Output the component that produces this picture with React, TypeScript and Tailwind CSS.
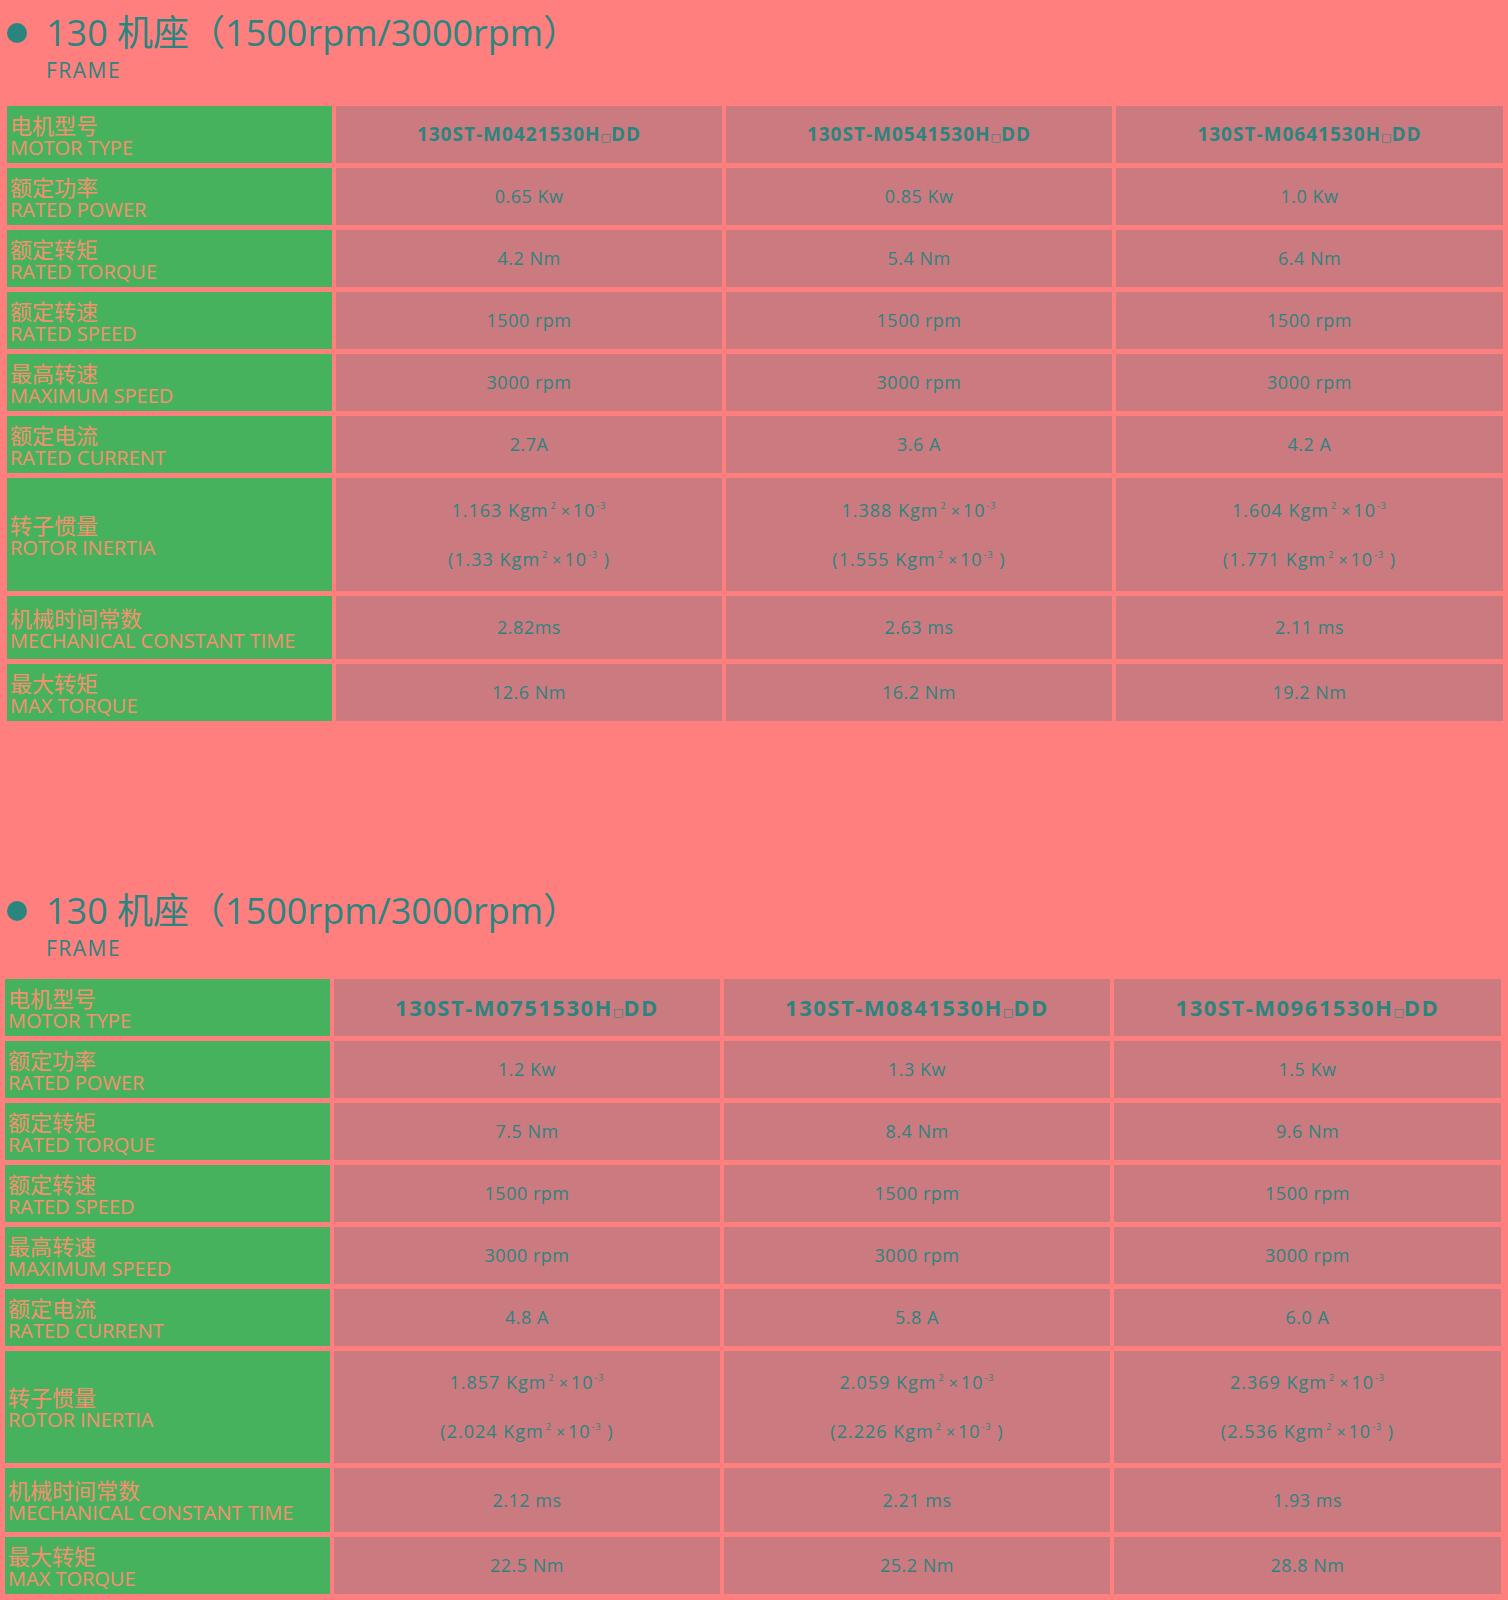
import React from "react";

type Spec = {
  zh: string;
  en: string;
  values: React.ReactNode[];
  h: string;
};

type Section = {
  models: string[];
  power: string[];
  torque: string[];
  current: string[];
  inertia: [string, string][];
  mech: string[];
  maxTorque: string[];
};

const sections: Section[] = [
  {
    models: ["130ST-M0421530H", "130ST-M0541530H", "130ST-M0641530H"],
    power: ["0.65 Kw", "0.85 Kw", "1.0 Kw"],
    torque: ["4.2 Nm", "5.4 Nm", "6.4 Nm"],
    current: ["2.7A", "3.6 A", "4.2 A"],
    inertia: [
      ["1.163", "1.33"],
      ["1.388", "1.555"],
      ["1.604", "1.771"],
    ],
    mech: ["2.82ms", "2.63 ms", "2.11 ms"],
    maxTorque: ["12.6 Nm", "16.2 Nm", "19.2 Nm"],
  },
  {
    models: ["130ST-M0751530H", "130ST-M0841530H", "130ST-M0961530H"],
    power: ["1.2 Kw", "1.3 Kw", "1.5 Kw"],
    torque: ["7.5 Nm", "8.4 Nm", "9.6 Nm"],
    current: ["4.8 A", "5.8 A", "6.0 A"],
    inertia: [
      ["1.857", "2.024"],
      ["2.059", "2.226"],
      ["2.369", "2.536"],
    ],
    mech: ["2.12 ms", "2.21 ms", "1.93 ms"],
    maxTorque: ["22.5 Nm", "25.2 Nm", "28.8 Nm"],
  },
];

function Unit() {
  return (
    <>
      {" "}Kgm<sup className="text-[9px] top-[-8px] px-[2px]">2</sup>
      <span className="text-[16px] mx-[2px]">×</span>10
      <sup className="text-[9px] top-[-8px] ml-[1px]">-3</sup>
    </>
  );
}

function Inertia({ a, b }: { a: string; b: string }) {
  return (
    <div className="flex flex-col items-center tracking-[1px]">
      <span className="leading-[48px]">
        {a}
        <Unit />
      </span>
      <span className="leading-[48px]">
        ({b}
        <Unit /> )
      </span>
    </div>
  );
}

function Model({ name, big }: { name: string; big: boolean }) {
  return (
    <span
      className={
        big
          ? "font-bold text-[22px] tracking-[1.5px]"
          : "font-bold text-[19px] tracking-[1px]"
      }
    >
      {name}
      <span className="font-['DejaVu_Sans'] font-normal text-[11px] tracking-normal">□</span>
      DD
    </span>
  );
}

function Row({ zh, en, values, h }: Spec) {
  return (
    <div className={`grid grid-cols-[325px_386px_386px_387px] gap-x-[4px] ${h}`}>
      <div className="bg-[#47b25e] flex flex-col justify-center pl-[3px] pt-[2px] text-[#f5906f]">
        <div className="text-[22px] leading-[24px]">{zh}</div>
        <div className="text-[20px] leading-[22px]">{en}</div>
      </div>
      {values.map((v, i) => (
        <div
          key={i}
          className="bg-[#cb7a80] flex items-center justify-center text-[#2b857f] text-[18px] tracking-[0.5px]"
        >
          {v}
        </div>
      ))}
    </div>
  );
}

function SpecTable({ s, big }: { s: Section; big: boolean }) {
  const rows: Spec[] = [
    {
      zh: "电机型号",
      en: "MOTOR TYPE",
      values: s.models.map((m) => <Model key={m} name={m} big={big} />),
      h: "h-[57px]",
    },
    { zh: "额定功率", en: "RATED POWER", values: s.power, h: "h-[57px]" },
    { zh: "额定转矩", en: "RATED TORQUE", values: s.torque, h: "h-[57px]" },
    { zh: "额定转速", en: "RATED SPEED", values: ["1500 rpm", "1500 rpm", "1500 rpm"], h: "h-[57px]" },
    { zh: "最高转速", en: "MAXIMUM SPEED", values: ["3000 rpm", "3000 rpm", "3000 rpm"], h: "h-[57px]" },
    { zh: "额定电流", en: "RATED CURRENT", values: s.current, h: "h-[57px]" },
    {
      zh: "转子惯量",
      en: "ROTOR INERTIA",
      values: s.inertia.map(([a, b]) => <Inertia key={a} a={a} b={b} />),
      h: big ? "h-[112px]" : "h-[113px]",
    },
    { zh: "机械时间常数", en: "MECHANICAL CONSTANT TIME", values: s.mech, h: big ? "h-[64px]" : "h-[63px]" },
    { zh: "最大转矩", en: "MAX TORQUE", values: s.maxTorque, h: "h-[57px]" },
  ];
  return (
    <div className="flex flex-col gap-[5px]">
      {rows.map((r) => (
        <Row key={r.en} {...r} />
      ))}
    </div>
  );
}

function Heading() {
  return (
    <div className="text-[#2b857f]">
      <div className="flex items-center h-[44px] pl-[7px]">
        <span className="w-5 h-5 rounded-full bg-[#2b857f] shrink-0" />
        <span className="ml-[19px] text-[36px] leading-[44px]">130 机座（1500rpm/3000rpm）</span>
      </div>
      <div className="mt-[3px] pl-[46px] text-[21px] leading-[24px] tracking-[1.5px]">FRAME</div>
    </div>
  );
}

export default function App() {
  return (
    <div className="w-[1508px] min-h-[1600px] bg-[#ff7f7f] font-['Open_Sans','Noto_Sans_CJK_SC',sans-serif]">
      <section className="pt-[11px]">
        <Heading />
        <div className="mt-[24px] pl-[7px]">
          <SpecTable s={sections[0]} big={false} />
        </div>
      </section>
      <section className="mt-[168px]">
        <Heading />
        <div className="mt-[19px] pl-[5px]">
          <SpecTable s={sections[1]} big={true} />
        </div>
      </section>
    </div>
  );
}
